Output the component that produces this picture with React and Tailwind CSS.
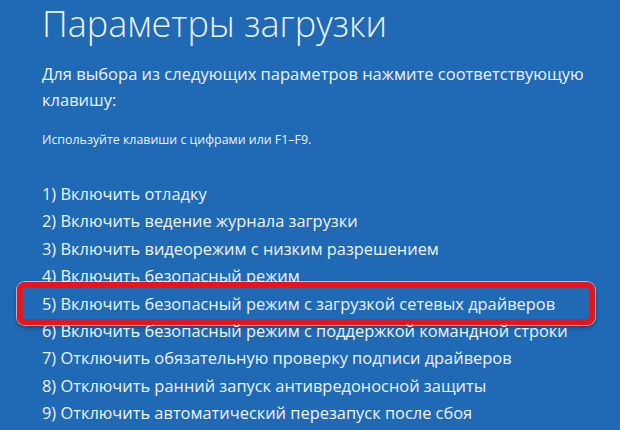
import React from 'react';

const options = [
  '1) Включить отладку',
  '2) Включить ведение журнала загрузки',
  '3) Включить видеорежим с низким разрешением',
  '4) Включить безопасный режим',
  '5) Включить безопасный режим с загрузкой сетевых драйверов',
  '6) Включить безопасный режим с поддержкой командной строки',
  '7) Отключить обязательную проверку подписи драйверов',
  '8) Отключить ранний запуск антивредоносной защиты',
  '9) Отключить автоматический перезапуск после сбоя',
];

const App = () => {
  return (
    <div
      className="w-[620px] h-[430px] overflow-hidden bg-[#1f69b5] text-[#eef4fb] pl-[42px]"
      style={{ fontFamily: '"Open Sans", "Noto Sans", sans-serif' }}
    >
      <h1 className="text-[36px] font-light leading-[46px] pt-[1px]">Параметры загрузки</h1>
      <p className="text-[16.5px] leading-[26px] mt-[14px] w-[560px]">
        Для выбора из следующих параметров нажмите соответствующую клавишу:
      </p>
      <p className="text-[12.4px] leading-[16px] mt-[19px]">Используйте клавиши с цифрами или F1–F9.</p>
      <ul className="mt-[32px]">
        {options.map((item, i) => (
          <li key={i} className="relative text-[16.4px] leading-[27.4px] whitespace-nowrap">
            {i === 4 && (
              <span className="absolute left-[-25px] top-[-8px] w-[578px] h-[43px] rounded-[8px] border-[6px] border-[#e8141c] shadow-[0_0_0_1px_rgba(255,255,255,0.6),0_2px_4px_rgba(0,0,0,0.45)]" />
            )}
            {item}
          </li>
        ))}
      </ul>
    </div>
  );
};

export default App;
